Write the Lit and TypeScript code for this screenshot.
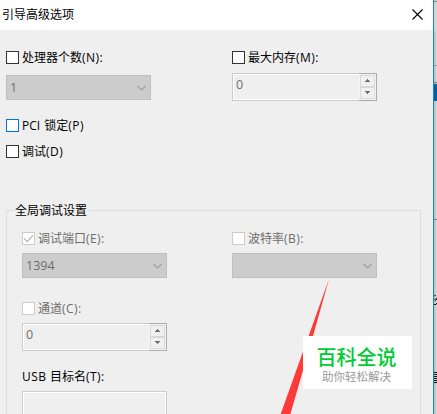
import { LitElement, html, svg, css, nothing } from "lit";
import { customElement, property } from "lit/decorators.js";

@customElement("check-label")
class CheckLabel extends LitElement {
  @property() label = "";
  @property() key = "";
  @property({ type: Boolean, reflect: true }) disabled = false;
  @property({ type: Boolean, reflect: true }) hot = false;
  @property({ type: Boolean }) checked = false;

  static styles = css`
    :host { display: flex; align-items: center; height: 13px; color: #000; }
    .box {
      box-sizing: border-box; width: 13px; height: 13px; flex: none;
      border: 1px solid #333; background: #fff; margin-right: 3px;
    }
    :host([hot]) .box { border-color: #0078d7; }
    :host([disabled]) .box { border-color: #ccc; }
    :host([disabled]) { color: #6d6d6d; }
    .text { line-height: 13px; white-space: pre; word-spacing: 1px; }
    .key { letter-spacing: 0.45px; }
    svg { display: block; }
  `;

  render() {
    return html`<span class="box">${this.checked
      ? svg`<svg width="11" height="11" viewBox="0 0 11 11"><path d="M1.2 5.4 L4.2 8.6 L10 2.2" fill="none" stroke="#b8b8b8" stroke-width="1.3"/></svg>`
      : nothing}</span><span class="text">${this.label}<span class="key">${this.key}</span></span>`;
  }
}

@customElement("combo-box")
class ComboBox extends LitElement {
  @property() value = "";
  static styles = css`
    :host {
      box-sizing: border-box; display: flex; align-items: center; justify-content: space-between;
      width: 145px; height: 25px; padding: 0 3px; border: 1px solid #bfbfbf;
      background: #ccc; color: #6d6d6d; font-size: 12.5px;
    }
    svg { display: block; }
  `;
  render() {
    return html`<span>${this.value}</span>
      <svg width="11" height="8" viewBox="0 0 11 8"><path d="M1.5 2 L5.5 6 L9.5 2" fill="none" stroke="#a0a0a0" stroke-width="1.2"/></svg>`;
  }
}

@customElement("spin-box")
class SpinBox extends LitElement {
  @property() value = "";
  static styles = css`
    :host {
      box-sizing: border-box; display: flex; width: 145px; height: 28px;
      border: 1px solid #ccc; color: #6d6d6d; font-size: 12.5px;
    }
    .field {
      flex: 1; box-sizing: border-box; border: 1px solid #fff; border-right: 0;
      padding-left: 2px; line-height: 19px;
    }
    .buttons {
      box-sizing: border-box; width: 18px; height: 28px; margin: -1px -1px 0 0; padding: 1px;
      border: 1px solid #ababb3; border-left: 0;
      display: flex; flex-direction: column; background: #f4f4f4;
    }
    .btn {
      flex: 1; box-sizing: border-box; width: 15px; border: 1px solid #d9d9d9; background: #f0f0f0;
      display: flex; align-items: center; justify-content: center;
    }
    .btn:first-child { padding-bottom: 1px; }
    .btn:last-child { padding-bottom: 1px; }
    svg { display: block; }
  `;
  render() {
    return html`<div class="field">${this.value}</div>
      <div class="buttons">
        <div class="btn"><svg width="5" height="3" shape-rendering="crispEdges"><path d="M2 0h1v1h1v1h1v1h-5v-1h1v-1h1z" fill="#6d6d6d"/></svg></div>
        <div class="btn"><svg width="5" height="3" shape-rendering="crispEdges"><path d="M0 0h5v1h-1v1h-1v1h-1v-1h-1v-1h-1z" fill="#6d6d6d"/></svg></div>
      </div>`;
  }
}

@customElement("app-root")
class AppRoot extends LitElement {
  static styles = css`
    :host {
      display: flex; position: relative; width: 437px; height: 414px; overflow: hidden;
      font: 12px/16px "Open Sans", "Noto Sans CJK SC", sans-serif; color: #000; background: #f0f0f0;
    }
    .dialog { box-sizing: border-box; width: 434px; height: 414px; border-right: 1px solid #1883d7; background: #efefef; }
    .title {
      box-sizing: border-box; height: 30px; padding: 0 10px 1px 2px; background: #fff;
      display: flex; align-items: center; justify-content: space-between;
    }
    .title svg { display: block; }
    .top { padding: 21px 0 0 6px; display: grid; grid-template-columns: 226px 145px; }
    .top .item { height: 68px; display: flex; flex-direction: column; gap: 11px; }
    .top .item.spin { gap: 9px; }
    .flags { padding-left: 6px; display: flex; flex-direction: column; gap: 13px; }
    .group {
      box-sizing: border-box; width: 415px; height: 240px; margin: 52px 0 0 6px;
      border: 1px solid #dcdcdc; border-top: 0;
    }
    .legend { display: flex; height: 16px; }
    .legend::before, .legend::after { content: ""; height: 1px; background: #dcdcdc; }
    .legend::before { width: 6px; }
    .legend::after { flex: 1; }
    .legend span { padding: 0 2px; margin-top: -7px; }
    .fields { padding: 6px 0 0 15px; display: grid; grid-template-columns: 210px 145px; }
    .fields .item { height: 70px; display: flex; flex-direction: column; gap: 8px; }
    .usb { padding-left: 15px; margin-top: -3px; display: flex; flex-direction: column; gap: 6px; }
    .key { letter-spacing: 0.45px; }
    .input { box-sizing: border-box; width: 145px; height: 28px; border: 1px solid #ccc; box-shadow: inset 0 0 0 1px #fff; }
    .behind {
      width: 3px; height: 414px; display: flex; flex-direction: column; overflow: hidden;
      background: linear-gradient(90deg, #bdbdbd, #d8d8d8);
    }
    .behind i { display: block; flex: none; }
    .b1 { height: 1px; background: #888; margin-top: 1px; }
    .b2 { height: 30px; background: #d4d4d4; }
    .b3 { height: 1px; background: #999; margin-top: 33px; }
    .b4 { height: 1px; background: #777; margin-top: 16px; }
    .b5 { height: 17px; background: #005fae; margin-top: 1px; }
    .b6 { height: 1px; background: #777; margin-top: 118px; }
    .glyph { flex: none; height: 12px; margin-top: 74px; }
    .lines { height: 11px; margin-top: 66px; background: repeating-linear-gradient(#111 0 1px, #ccc 1px 2px); }
    .arrow { position: absolute; left: 270px; top: 270px; }
    .mark {
      position: absolute; left: 303px; top: 336px; width: 109px; height: 53px; background: #fff;
      display: flex; flex-direction: column; align-items: center; box-sizing: border-box; padding: 9px 2px 0 0;
      font-family: "Noto Sans CJK SC", sans-serif;
    }
    .mark b { font-size: 20px; line-height: 24px; font-weight: 500; color: #00cc33; }
    .mark span { font-size: 11.5px; line-height: 14px; color: #999; }
  `;

  render() {
    return html`
      <div class="dialog">
        <div class="title"><span>引导高级选项</span>
          <svg width="11" height="11" viewBox="0 0 11 11"><path d="M.5 .5 L10.5 10.5 M10.5 .5 L.5 10.5" stroke="#000" stroke-width="1.1"/></svg>
        </div>
        <div class="top">
          <div class="item"><check-label label="处理器个数" key="(N):"></check-label><combo-box value="1"></combo-box></div>
          <div class="item spin"><check-label label="最大内存" key="(M):"></check-label><spin-box value="0"></spin-box></div>
        </div>
        <div class="flags">
          <check-label hot label="PCI 锁定" key="(P)"></check-label>
          <check-label label="调试" key="(D)"></check-label>
        </div>
        <div class="group">
          <div class="legend"><span>全局调试设置</span></div>
          <div class="fields">
            <div class="item"><check-label disabled checked label="调试端口" key="(E):"></check-label><combo-box value="1394"></combo-box></div>
            <div class="item"><check-label disabled label="波特率" key="(B):"></check-label><combo-box></combo-box></div>
            <div class="item"><check-label disabled label="通道" key="(C):"></check-label><spin-box value="0"></spin-box></div>
          </div>
          <div class="usb"><span><span class="key">USB </span>目标名<span class="key">(T):</span></span><div class="input"></div></div>
        </div>
      </div>
      <div class="behind">
        <i class="b1"></i><i class="b2"></i><i class="b3"></i><i class="b4"></i><i class="b5"></i><i class="b6"></i>
        <svg class="glyph" width="3" height="12"><path d="M0 2L2 1M0 6L3 4M1 7L3 5" stroke="#333" fill="none"/><path d="M0 10.5H2L3 9" stroke="#111" fill="none"/></svg>
        <i class="lines"></i>
      </div>
      <svg class="arrow" width="70" height="144" viewBox="270 270 70 144"><path d="M329 279 L280.7 414 L290.4 414 L313 336 Z" fill="#ff3838"/></svg>
      <div class="mark"><b>百科全说</b><span>助你轻松解决</span></div>
    `;
  }
}
